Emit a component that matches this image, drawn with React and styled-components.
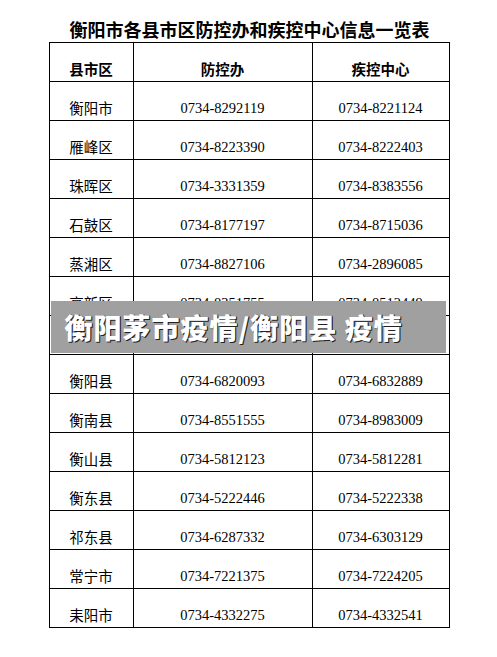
import React from "react";
import styled, { createGlobalStyle } from "styled-components";

const rows = [
  ["衡阳市", "0734-8292119", "0734-8221124"],
  ["雁峰区", "0734-8223390", "0734-8222403"],
  ["珠晖区", "0734-3331359", "0734-8383556"],
  ["石鼓区", "0734-8177197", "0734-8715036"],
  ["蒸湘区", "0734-8827106", "0734-2896085"],
  ["高新区", "0734-8351755", "0734-8512449"],
  ["南岳区", "0734-5662236", "0734-5667512"],
  ["衡阳县", "0734-6820093", "0734-6832889"],
  ["衡南县", "0734-8551555", "0734-8983009"],
  ["衡山县", "0734-5812123", "0734-5812281"],
  ["衡东县", "0734-5222446", "0734-5222338"],
  ["祁东县", "0734-6287332", "0734-6303129"],
  ["常宁市", "0734-7221375", "0734-7224205"],
  ["耒阳市", "0734-4332275", "0734-4332541"],
];

const GlobalStyle = createGlobalStyle`
  html, body {
    margin: 0;
    padding: 0;
    background: #fff;
  }
`;

const Page = styled.div`
  width: 497px;
  height: 657px;
  display: flex;
  flex-direction: column;
  align-items: center;
  padding-top: 17px;
  box-sizing: border-box;
  font-family: "Noto Sans CJK SC", sans-serif;
  color: #000;
`;

const Title = styled.h1`
  margin: 0 0 1px 2px;
  font-size: 18px;
  line-height: 24px;
  font-weight: 700;
`;

const TableWrap = styled.div`
  position: relative;
  margin-left: 1px;
`;

const Table = styled.table`
  border-collapse: collapse;
  width: 401px;
  table-layout: fixed;
  font-size: 14.5px;
`;

const Col = styled.col`
  width: ${(p) => p.$w}px;
`;

const Cell = styled.td`
  border: 1px solid #000;
  height: 39px;
  padding: 13px 0 0;
  text-align: center;
  vertical-align: middle;
  line-height: 20px;
  font-weight: ${(p) => (p.$head ? 700 : 400)};
  font-family: ${(p) =>
    p.$cjk
      ? `"Noto Sans CJK SC", sans-serif`
      : `"Liberation Serif", "Noto Sans CJK SC", serif`};
  box-sizing: border-box;
`;

const Banner = styled.div`
  position: absolute;
  left: 2px;
  top: 259px;
  width: 395px;
  height: 52px;
  background: #a0a0a0;
  display: flex;
  align-items: center;
  padding-left: 14px;
  box-sizing: border-box;
  color: #fff;
  font-family: "Noto Sans CJK SC", sans-serif;
  font-weight: 900;
  font-size: 28px;
  letter-spacing: 1px;
  text-shadow: 1px 1px 0 #222, 1px 0 0 #444;
  white-space: pre;
`;

export default function App() {
  return (
    <>
      <GlobalStyle />
      <Page>
        <Title>衡阳市各县市区防控办和疾控中心信息一览表</Title>
        <TableWrap>
          <Table>
            <colgroup>
              <Col $w={84} />
              <Col $w={179} />
              <Col $w={137} />
            </colgroup>
            <thead>
              <tr>
                <Cell as="th" $head $cjk>县市区</Cell>
                <Cell as="th" $head $cjk>防控办</Cell>
                <Cell as="th" $head $cjk>疾控中心</Cell>
              </tr>
            </thead>
            <tbody>
              {rows.map(([area, office, center]) => (
                <tr key={area}>
                  <Cell $cjk>{area}</Cell>
                  <Cell>{office}</Cell>
                  <Cell>{center}</Cell>
                </tr>
              ))}
            </tbody>
          </Table>
          <Banner>{"衡阳茅市疫情/衡阳县 疫情"}</Banner>
        </TableWrap>
      </Page>
    </>
  );
}
